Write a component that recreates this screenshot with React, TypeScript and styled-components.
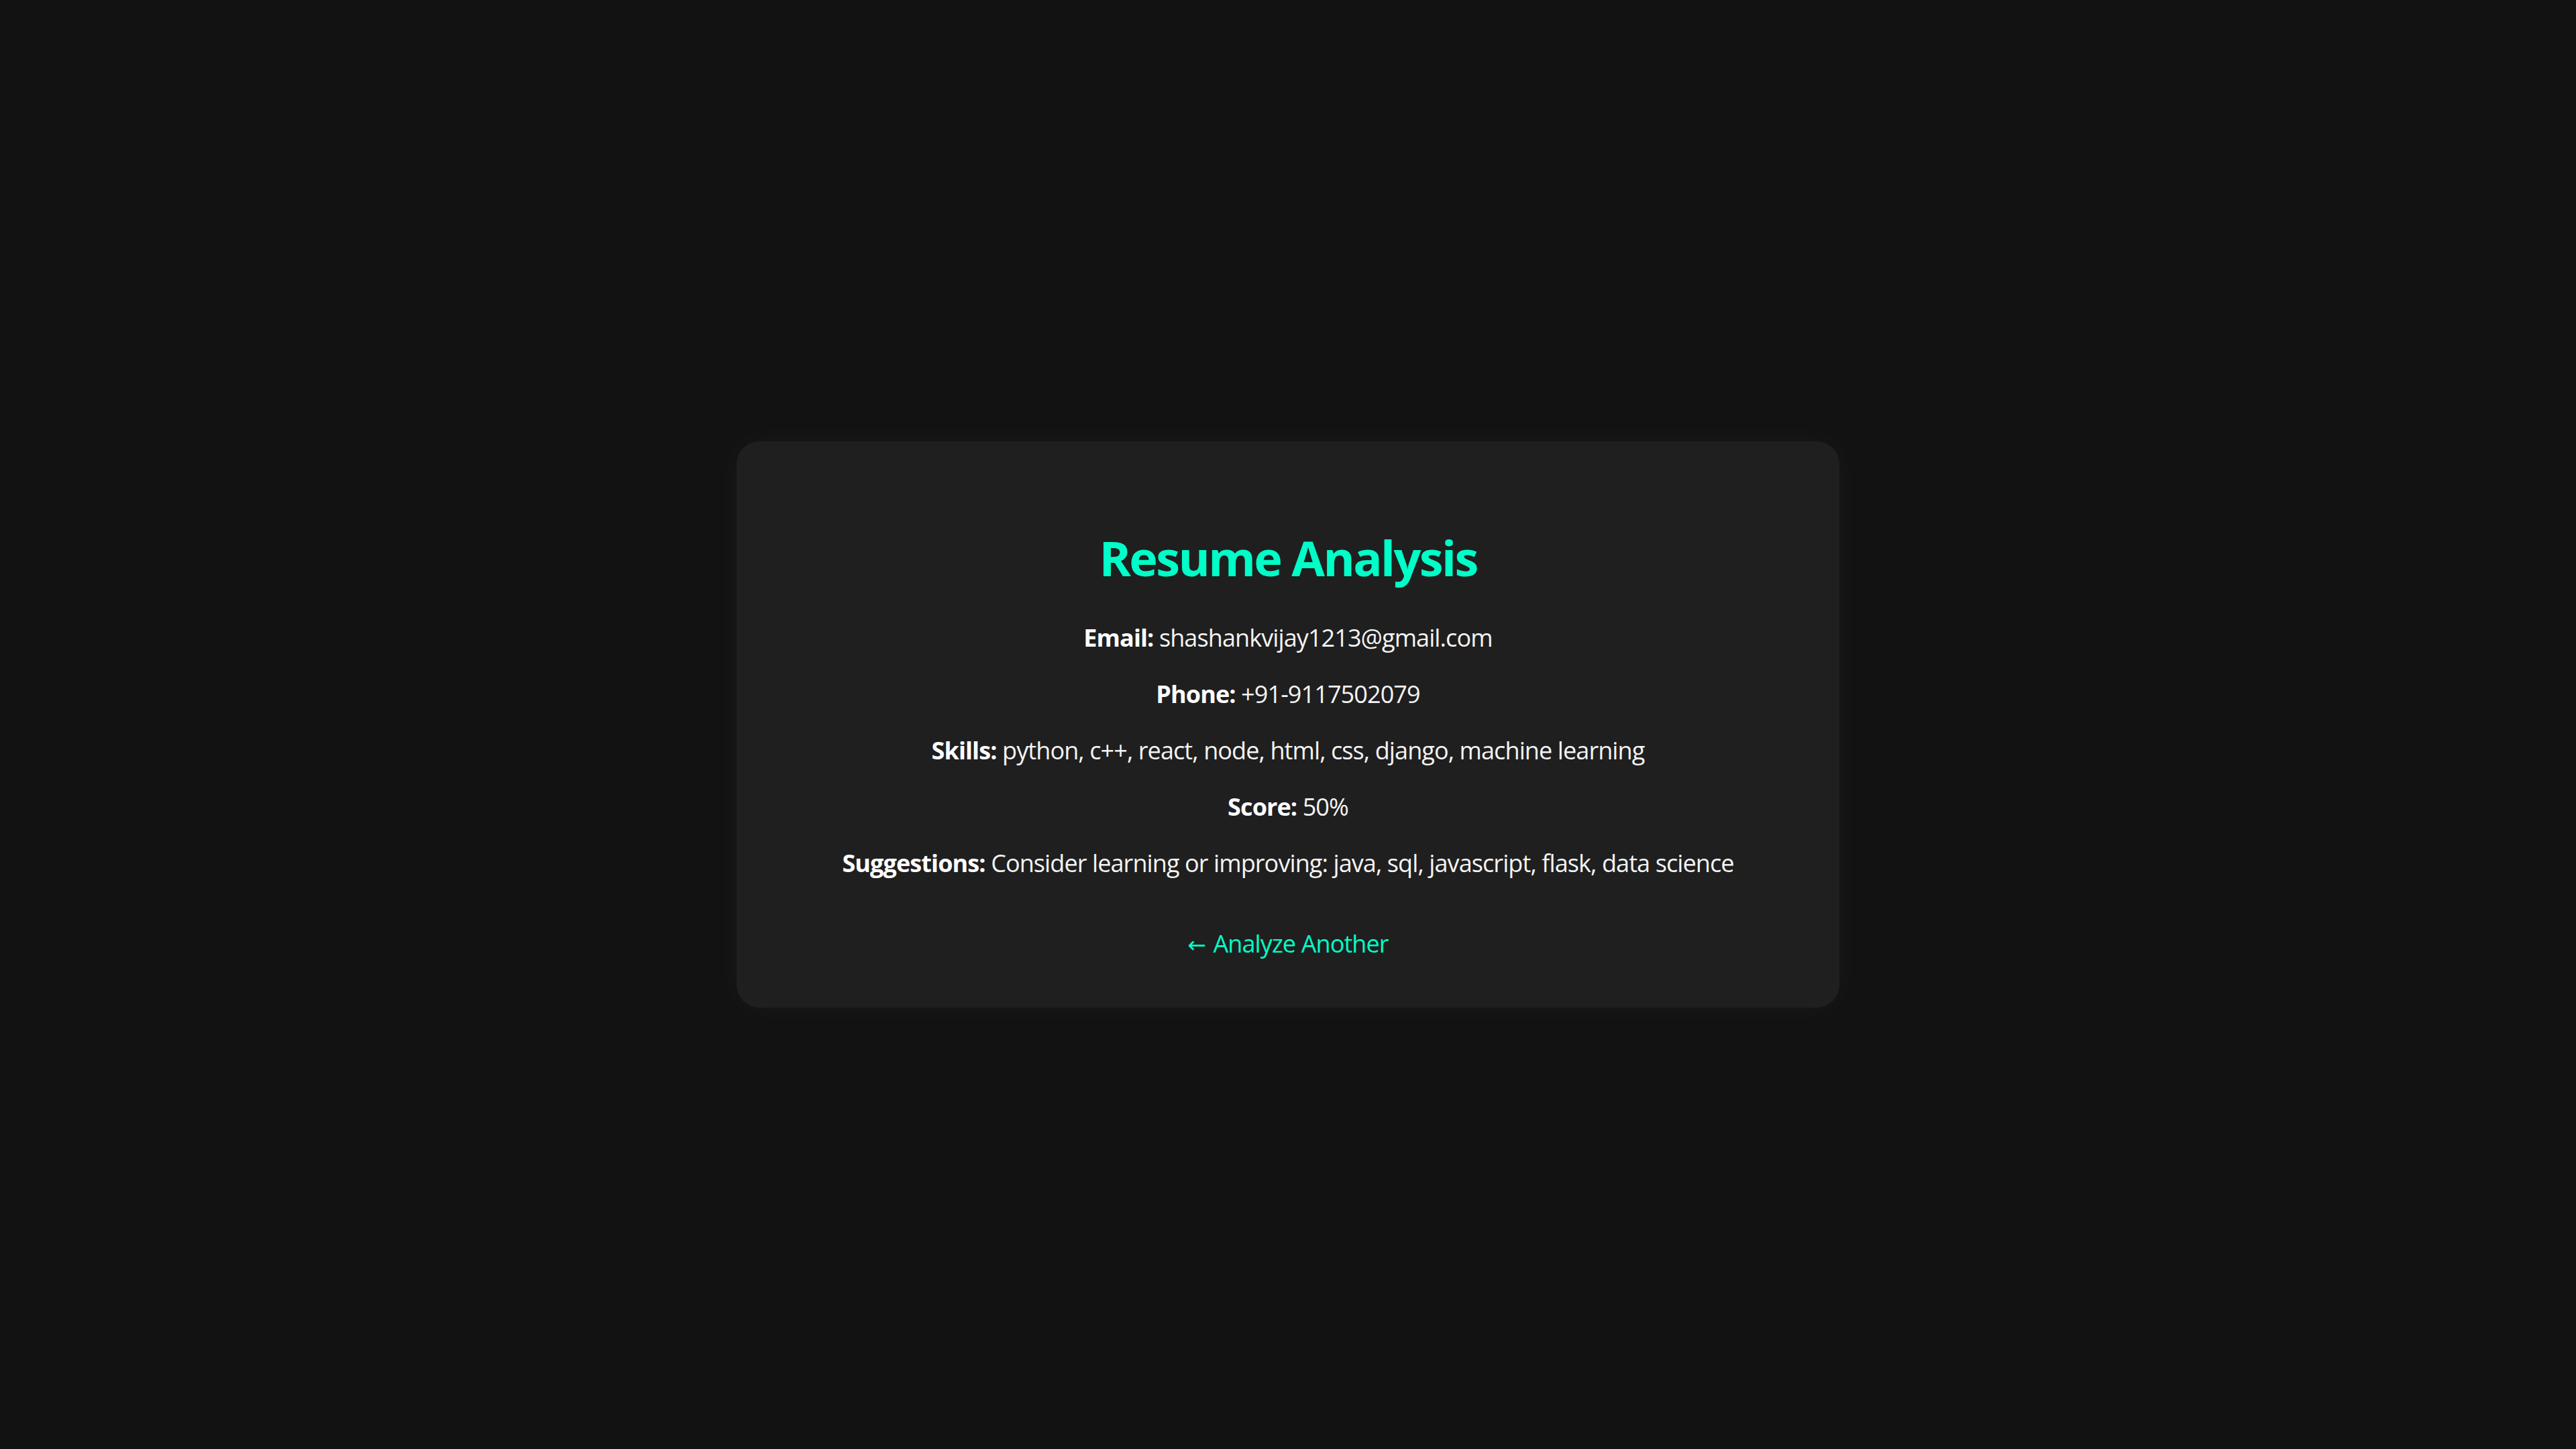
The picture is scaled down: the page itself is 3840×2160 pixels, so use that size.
import React from "react";
import styled, { createGlobalStyle } from "styled-components";

const GlobalStyle = createGlobalStyle`
  html, body {
    margin: 0;
    padding: 0;
    background: #121212;
  }
  body {
    font-family: "Segoe UI", "Open Sans", "Noto Sans", sans-serif;
    color: #f2f2f2;
  }
`;

const Page = styled.main`
  min-height: 2160px;
  display: flex;
  align-items: center;
  justify-content: center;
  background: #121212;
`;

const Card = styled.section`
  box-sizing: border-box;
  width: 1644px;
  padding: 77px 72px 69px;
  background: #1f1f1f;
  border-radius: 34px;
  box-shadow: 0 0 48px rgba(255, 255, 255, 0.035);
  text-align: center;
`;

const Title = styled.h1`
  margin: 48px 0 48px;
  font-size: 72px;
  line-height: 96px;
  font-weight: 700;
  letter-spacing: -0.036em;
  color: #00ffc8;
`;

const Field = styled.p`
  margin: 0 0 36px;
  font-size: 36px;
  line-height: 48px;
  letter-spacing: -0.025em;
  color: #f4f4f4;
`;

const Label = styled.strong`
  font-weight: 700;
  color: #ffffff;
`;

const Actions = styled.div`
  margin-top: 72px;
  font-size: 36px;
  line-height: 48px;
  letter-spacing: -0.025em;
`;

const BackLink = styled.a`
  color: #00ffc8;
  text-decoration: none;
  cursor: pointer;
`;

const Arrow = styled.span`
  font-family: "DejaVu Sans", sans-serif;
  font-size: 33px;
  letter-spacing: 0;
  margin-right: 2px;
`;

const fields: { label: string; value: string }[] = [
  { label: "Email:", value: "shashankvijay1213@gmail.com" },
  { label: "Phone:", value: "+91-9117502079" },
  { label: "Skills:", value: "python, c++, react, node, html, css, django, machine learning" },
  { label: "Score:", value: "50%" },
  {
    label: "Suggestions:",
    value: "Consider learning or improving: java, sql, javascript, flask, data science",
  },
];

export default function App() {
  return (
    <>
      <GlobalStyle />
      <Page>
        <Card>
          <Title>Resume Analysis</Title>
          {fields.map((f) => (
            <Field key={f.label}>
              <Label>{f.label}</Label> {f.value}
            </Field>
          ))}
          <Actions>
            <BackLink href="#">
              <Arrow>←</Arrow> Analyze Another
            </BackLink>
          </Actions>
        </Card>
      </Page>
    </>
  );
}
